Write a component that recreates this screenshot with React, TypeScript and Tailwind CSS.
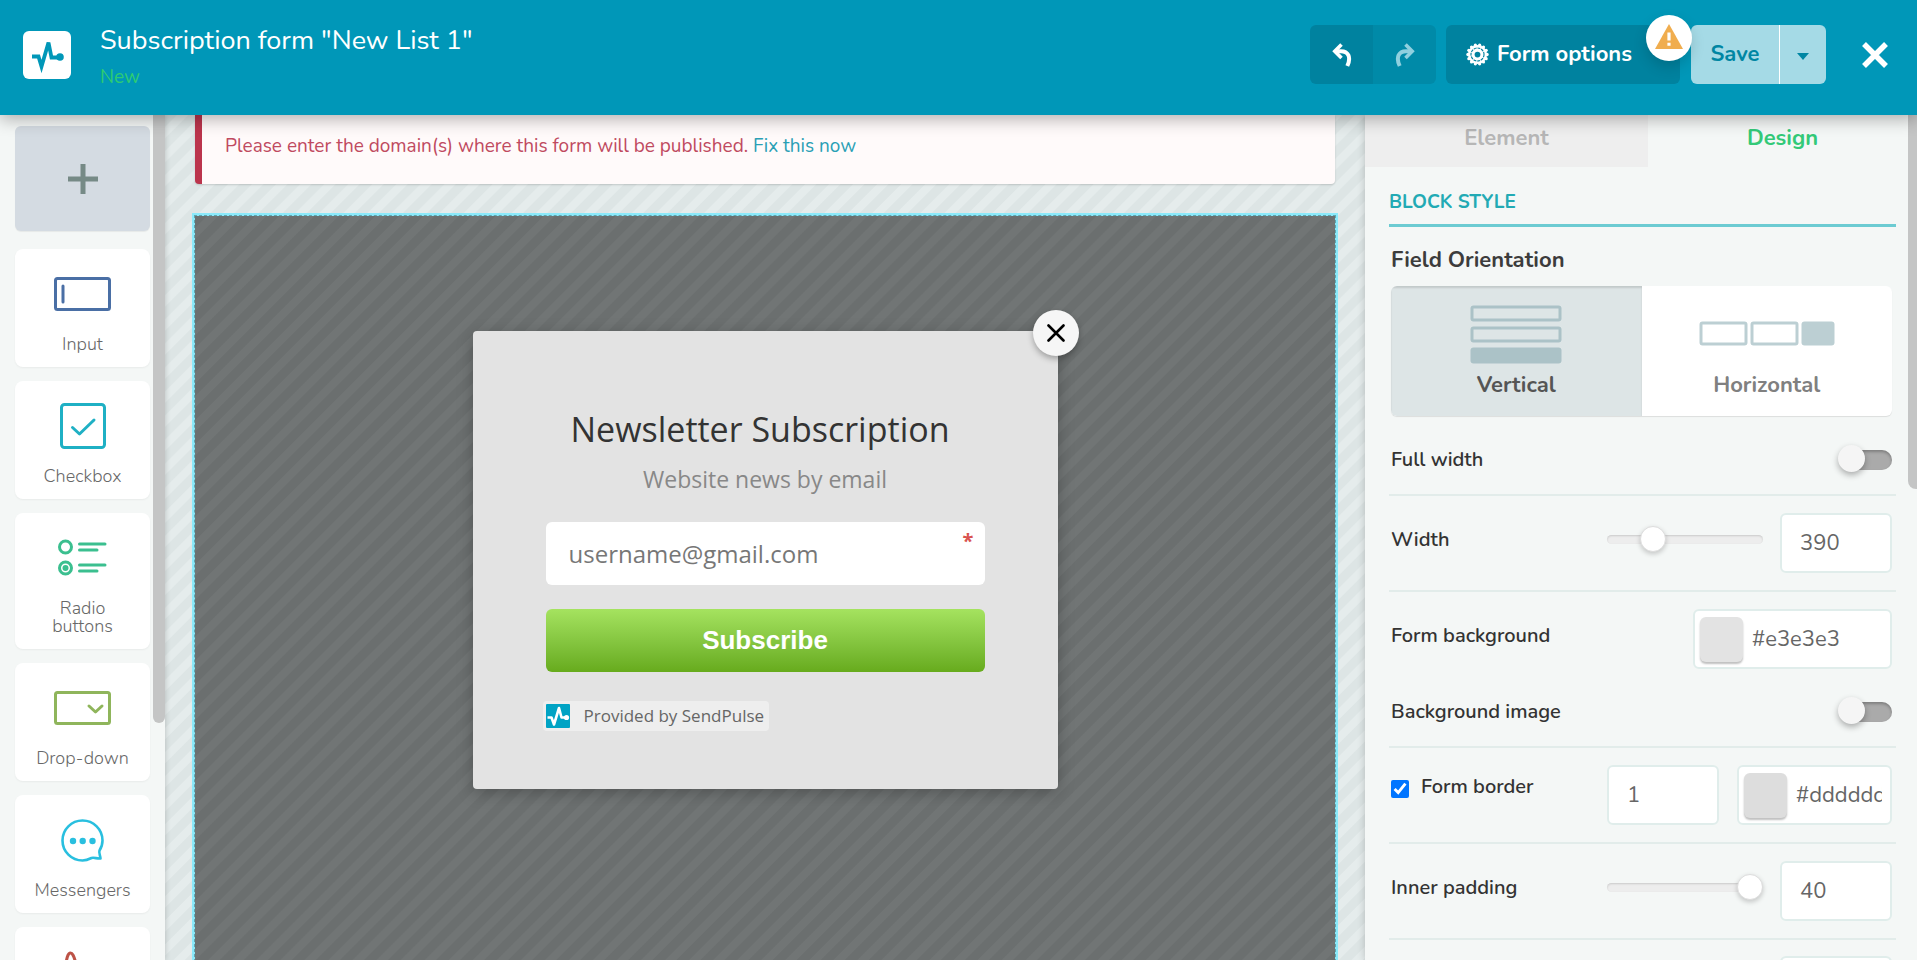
import React, { useState } from 'react';
import type { ReactNode } from 'react';

function PulseMark({ className }: { className: string }) {
  return (
    <svg viewBox="0 0 48 48" className={className} fill="none" aria-hidden="true">
      <path d="M9 25.500H15.500L18.500 35.500L25.500 11.500L28.500 26.500H36" stroke="currentColor" strokeWidth="3.800" strokeLinejoin="miter" />
      <circle cx="37" cy="26" r="3.800" fill="currentColor" />
    </svg>
  );
}

function PulseBadge() {
  return (
    <svg viewBox="0 0 24 24" width="24" height="24" fill="none" aria-hidden="true">
      <rect width="24" height="24" rx="1" fill="#00a3c4" />
      <path d="M1.500 13.500H5.500L8 20.500L13 4L15.500 13.500H20" stroke="#fff" strokeWidth="2.600" strokeLinejoin="round" />
      <circle cx="20.500" cy="13.500" r="2.600" fill="#fff" />
    </svg>
  );
}

function UndoArrow({ className }: { className?: string }) {
  return (
    <svg viewBox="0 0 20 24" className={className} width="20" height="24" fill="none" aria-hidden="true">
      <path d="M9.500 1.500L2.800 8.200L9.500 14.900" stroke="currentColor" strokeWidth="3.600" />
      <path d="M3 8.200H9C16 8.200 19.500 14 15.300 23" stroke="currentColor" strokeWidth="4" />
    </svg>
  );
}

const TEETH = Array.from({ length: 14 }, (_, i) => (i * 2 * Math.PI) / 14);

function Gear() {
  return (
    <svg viewBox="0 0 24 24" width="23" height="23" aria-hidden="true">
      <circle cx="12" cy="12" r="10" fill="#fff" />
      {TEETH.map((a) => (
        <circle key={a} cx={12 + 10 * Math.cos(a)} cy={12 + 10 * Math.sin(a)} r="1.700" fill="#fff" />
      ))}
      <circle cx="12" cy="12" r="6.800" fill="none" stroke="#00829f" strokeWidth="1.200" strokeDasharray="3 .9" />
      <circle cx="12" cy="12" r="3" fill="#00829f" />
    </svg>
  );
}

function Header() {
  return (
    <header className="relative z-20 flex h-[115px] shrink-0 items-start bg-[#0097b8] pl-[23px] pr-7 text-white shadow-[0_4px_16px_rgba(0,0,0,0.3)]">
      <div className="mt-[31px] size-12 shrink-0 rounded-md bg-white text-[#0097b8]">
        <PulseMark className="size-12" />
      </div>
      <div className="ml-[29px] mt-[23px] flex-1">
        <h1 className="text-[27px] leading-9">Subscription form "New List 1"</h1>
        <p className="text-[19px] leading-9 text-[#2ecc71]">New</p>
      </div>
      <div className="mt-[25px] flex h-[59px] items-stretch">
        <button type="button" aria-label="Undo" className="flex w-[63px] items-center justify-center rounded-l-md bg-[#00829f]">
          <UndoArrow />
        </button>
        <button type="button" aria-label="Redo" className="flex w-[63px] items-center justify-center rounded-r-md bg-[#008aa8] text-[#8fd0df]">
          <UndoArrow className="-scale-x-100" />
        </button>
        <button type="button" className="relative ml-[10px] flex w-[234px] items-center gap-2 rounded-md bg-[#00829f] pl-5 text-[22px] font-bold">
          <Gear />
          Form options
          <span className="absolute -right-3 -top-[10px] flex size-[46px] items-center justify-center rounded-full bg-white shadow-[0_6px_14px_rgba(0,0,0,0.15)]">
            <svg viewBox="0 0 28 25" width="28" height="25" className="-mt-1" aria-hidden="true">
              <path d="M14 0L28 25H0Z" fill="#f0ad4e" />
              <path d="M12.400 8.500h3.200v8h-3.200zM12.400 18.700h3.200v3h-3.200z" fill="#fff" />
            </svg>
          </span>
        </button>
        <button type="button" className="ml-[11px] w-[88px] rounded-l-md bg-[#a5dae6] text-[22px] font-bold text-[#0086a3]">
          Save
        </button>
        <button type="button" aria-label="More save options" className="flex w-[47px] items-center justify-center rounded-r-md border-l border-white bg-[#a5dae6]">
          <svg viewBox="0 0 12 7" width="12" height="7" className="mt-1" aria-hidden="true">
            <path d="M0 0H12L6 7Z" fill="#0086a3" />
          </svg>
        </button>
        <button type="button" aria-label="Close" className="ml-[35px] flex w-7 items-center">
          <svg viewBox="0 0 28 28" width="28" height="28" aria-hidden="true">
            <path d="M3 3L25 25M25 3L3 25" stroke="#fff" strokeWidth="5.500" />
          </svg>
        </button>
      </div>
    </header>
  );
}

function PaletteCard({ label, children }: { label?: string; children: ReactNode }) {
  return (
    <button type="button" className="flex w-full shrink-0 flex-col items-center rounded-lg bg-white pb-[14px] shadow-[0_1px_2px_rgba(0,0,0,0.05)]">
      <span className="flex h-[86px] items-center pt-1">{children}</span>
      <span className="min-h-[18px] w-[104px] text-center text-[18px] font-light leading-[18px] text-[#686868]">{label}</span>
    </button>
  );
}

function Palette() {
  return (
    <aside className="relative z-10 flex w-[165px] shrink-0 flex-col gap-[14px] overflow-hidden bg-[#f4f7f6] pl-[15px] pr-[15px] pt-[11px] shadow-[0_0_6px_rgba(0,0,0,0.2)]">
      <button type="button" aria-label="Add element" className="mb-1 flex h-[105px] shrink-0 items-center justify-center rounded-md bg-[#d4dbe2] shadow-[0_1px_1px_rgba(0,0,0,0.06)]">
        <svg viewBox="0 0 30 30" width="30" height="30" aria-hidden="true">
          <path d="M15 0V30M0 15H30" stroke="#768a86" strokeWidth="5" />
        </svg>
      </button>
      <PaletteCard label="Input">
        <svg viewBox="0 0 57 34" width="57" height="34" fill="none" stroke="#4a6fa5" aria-hidden="true">
          <rect x="1.500" y="1.500" width="54" height="31" rx="2" strokeWidth="3" />
          <path d="M9 9V25" strokeWidth="3" strokeLinecap="round" />
        </svg>
      </PaletteCard>
      <PaletteCard label="Checkbox">
        <svg viewBox="0 0 46 46" width="46" height="46" fill="none" stroke="#1fb0c4" strokeWidth="3" aria-hidden="true">
          <rect x="1.500" y="1.500" width="43" height="43" rx="3" />
          <path d="M12.500 24.500L19.500 31L34 17" strokeLinecap="round" strokeLinejoin="round" />
        </svg>
      </PaletteCard>
      <PaletteCard label="Radio buttons">
        <svg viewBox="0 0 49 39" width="49" height="39" fill="none" stroke="#3bbf8f" strokeWidth="3" aria-hidden="true">
          <circle cx="7.500" cy="8" r="6" />
          <circle cx="7.500" cy="29" r="6" />
          <circle cx="7.500" cy="29" r="3" fill="#3bbf8f" stroke="none" />
          <path d="M21.500 5H47M21.500 11H39M21.500 26H47M21.500 32H39" strokeLinecap="round" />
        </svg>
      </PaletteCard>
      <PaletteCard label="Drop-down">
        <svg viewBox="0 0 57 34" width="57" height="34" fill="none" stroke="#8fb55b" strokeWidth="3" aria-hidden="true">
          <rect x="1.500" y="1.500" width="54" height="31" rx="2" />
          <path d="M35 15L41.500 21L48 15" strokeLinecap="round" strokeLinejoin="round" />
        </svg>
      </PaletteCard>
      <PaletteCard label="Messengers">
        <svg viewBox="0 0 43 43" width="43" height="43" fill="none" aria-hidden="true">
          <path d="M38.500 31.500C40.500 28.500 41.500 25 41.500 21.500A20 20 0 1 0 21.500 41.500C25 41.500 27.500 40.500 30.500 39C33 38 36 40 39.500 39.500C39.500 37 37.500 34 38.500 31.500Z" stroke="#29bfdf" strokeWidth="2.600" strokeLinejoin="round" />
          <g fill="#29bfdf">
            <circle cx="12" cy="22" r="3.200" />
            <circle cx="21.700" cy="22" r="3.200" />
            <circle cx="31.500" cy="22" r="3.200" />
          </g>
        </svg>
      </PaletteCard>
      <PaletteCard>
        <svg viewBox="0 0 44 44" width="44" height="44" fill="none" stroke="#bd5347" strokeWidth="3" aria-hidden="true">
          <path d="M2 28C5 18 5 3 9.500 3C14 3 14 18 22 26C28 32 40 24 41 30C42 36 30 26 12 30" />
        </svg>
      </PaletteCard>
      <span className="absolute right-0 top-0 h-[608px] w-3 rounded-b-full bg-[#c4c5c5]" />
    </aside>
  );
}

function Preview() {
  return (
    <main className="flex min-w-0 flex-1 flex-col overflow-hidden bg-[repeating-linear-gradient(135deg,#dde5e5_0px,#dde5e5_8px,#e5ecec_9px,#e5ecec_16px,#dde5e5_17px)] px-[27px]">
      <div className="mx-[3px] h-[69px] shrink-0 rounded-b border-l-[7px] border-[#bb344c] bg-[#fffafa] pl-[23px] pt-4 text-[19px] leading-[30px] text-[#c04a60] shadow-[0_1px_2px_rgba(0,0,0,0.15)]">
        Please enter the domain(s) where this form will be published.{' '}
        <a href="#domains" className="text-[#2a9fb5]">Fix this now</a>
      </div>
      <section className="-mb-1 mt-[29px] flex flex-1 justify-center border-[3px] border-[#8be9fa] bg-[repeating-linear-gradient(135deg,#6b6f6f_0px,#6b6f6f_8px,#717575_9px,#717575_16px,#6b6f6f_17px)] pt-[115px] outline-1 -outline-offset-3 outline-dashed outline-[#5fa5ae]">
        <form
          onSubmit={(e) => e.preventDefault()}
          className="relative flex h-[458px] w-[585px] flex-col rounded bg-[#e3e3e3] px-[73px] font-['Segoe_UI','Open_Sans',sans-serif] shadow-[0_4px_16px_rgba(0,0,0,0.25)]"
        >
          <button type="button" aria-label="Close form" className="absolute -right-[21px] -top-[21px] flex size-[46px] items-center justify-center rounded-full bg-[#f6f6f6] shadow-[0_3px_6px_rgba(0,0,0,0.3)]">
            <svg viewBox="0 0 18 18" width="18" height="18" aria-hidden="true">
              <path d="M1.500 1.500L16.500 16.500M16.500 1.500L1.500 16.500" stroke="#000" strokeWidth="2.600" strokeLinecap="round" />
            </svg>
          </button>
          <h2 className="mt-[74px] pr-[10px] text-center text-[34px] leading-[48px] text-[#333]">Newsletter Subscription</h2>
          <p className="mt-[10px] text-center text-[23px] leading-8 text-[#888]">Website news by email</p>
          <div className="relative mt-[27px]">
            <input
              type="email"
              aria-label="Email"
              placeholder="username@gmail.com"
              className="h-[63px] w-full rounded-md bg-white px-[23px] text-[24px] text-[#777] outline-none placeholder:text-[#777]"
            />
            <span className="absolute right-[11px] top-[7px] text-[20px] font-bold leading-6 text-[#d9534f]">*</span>
          </div>
          <button type="submit" className="mt-6 h-[63px] rounded-md bg-linear-to-b from-[#a5e35f] to-[#67ab1c] font-['Liberation_Sans',sans-serif] text-[26px] font-bold text-white">
            Subscribe
          </button>
          <a href="#sendpulse" className="-ml-[3px] mt-[29px] flex h-[30px] items-center gap-[14px] self-start rounded bg-[#eeeeee] pl-[3px] pr-[5px] text-[17px] text-[#666]">
            <PulseBadge />
            Provided by SendPulse
          </a>
        </form>
      </section>
    </main>
  );
}

function Toggle({ id }: { id: string }) {
  return (
    <input
      id={id}
      type="checkbox"
      role="switch"
      className="relative h-5 w-[50px] appearance-none rounded-full bg-[#aaaaaa] shadow-[inset_0_2px_3px_rgba(0,0,0,0.25)] before:absolute before:-left-1 before:-top-[5px] before:size-[27px] before:rounded-full before:bg-[#f5f5f5] before:shadow-[0_3px_6px_rgba(0,0,0,0.3)] checked:bg-[#2ecc71] checked:before:left-[27px]"
    />
  );
}

function Slider({ label, min, max, value, onChange }: { label: string; min: number; max: number; value: number; onChange: (n: number) => void }) {
  return (
    <input
      type="range"
      aria-label={label}
      min={min}
      max={max}
      value={value}
      onChange={(e) => onChange(Number(e.target.value))}
      className="mb-2 mr-[17px] h-[9px] w-[156px] appearance-none rounded-full bg-[#ededed] shadow-[inset_0_1px_2px_rgba(0,0,0,0.15)] [&::-webkit-slider-thumb]:size-[26px] [&::-webkit-slider-thumb]:appearance-none [&::-webkit-slider-thumb]:rounded-full [&::-webkit-slider-thumb]:border [&::-webkit-slider-thumb]:border-[#dddddd] [&::-webkit-slider-thumb]:bg-white [&::-webkit-slider-thumb]:shadow-[0_2px_5px_rgba(0,0,0,0.2)]"
    />
  );
}

function NumberBox({ id, label, value, onChange }: { id: string; label?: string; value: number; onChange: (n: number) => void }) {
  return (
    <input
      id={id}
      aria-label={label}
      type="text"
      inputMode="numeric"
      value={value}
      onChange={(e) => onChange(Number(e.target.value) || 0)}
      className="h-[60px] w-28 rounded-md border-2 border-[#e0edeb] bg-white px-[18px] text-[22px] text-[#666] outline-none"
    />
  );
}

function ColourBox({ id, label, initial, className }: { id: string; label?: string; initial: string; className: string }) {
  const [value, setValue] = useState(initial);
  return (
    <div className={`flex h-[60px] items-center rounded-md border-2 border-[#e0edeb] bg-white pl-[5px] pr-[8px] ${className}`}>
      <button type="button" aria-label="Pick colour" className="h-[45px] w-[43px] shrink-0 rounded-md shadow-[0_2px_2px_rgba(0,0,0,0.25)]" style={{ backgroundColor: value }} />
      <input id={id} aria-label={label} value={value} onChange={(e) => setValue(e.target.value)} className="ml-[9px] min-w-0 flex-1 bg-transparent text-[22px] text-[#666] outline-none" />
    </div>
  );
}

function Row({ children }: { children: ReactNode }) {
  return <div className="flex h-24 shrink-0 items-center border-b-2 border-[#e2ecea] pl-[2px] pr-1">{children}</div>;
}

const labelStyle = 'mr-auto pb-[6px] text-[20px] font-semibold text-[#333333]';

function Settings() {
  const [width, setWidth] = useState(390);
  const [border, setBorder] = useState(1);
  const [padding, setPadding] = useState(40);
  const [corner, setCorner] = useState(4);
  return (
    <aside className="relative z-10 flex w-[552px] shrink-0 flex-col overflow-hidden bg-[#f4f7f6] shadow-[0_0_8px_rgba(0,0,0,0.2)]">
      <div role="tablist" className="flex h-[52px] shrink-0 text-[22px] font-bold">
        <button type="button" role="tab" aria-selected="false" className="w-[283px] bg-[#eeeeee] pb-[6px] text-[#b6b6b6]">Element</button>
        <button type="button" role="tab" aria-selected="true" className="flex-1 pb-[6px] text-[#33c978]">Design</button>
      </div>
      <div className="ml-6 mr-[21px] flex min-h-0 flex-col">
        <h2 className="flex h-[60px] shrink-0 items-end border-b-[3px] border-[#6ccbd2] pb-[7px] text-[19px] font-bold leading-[30px] text-[#22aab4]">
          BLOCK STYLE
        </h2>
        <div className="pl-[2px] pr-1 pt-[17px]">
          <h3 className="text-[22px] font-bold leading-8 text-[#3c3c3c]">Field Orientation</h3>
          <div className="mt-[10px] flex h-[130px] overflow-hidden rounded-md bg-white shadow-[0_1px_1px_rgba(0,0,0,0.1)]">
            <button type="button" aria-pressed="true" className="flex flex-1 flex-col items-center bg-[#dde5e6] pt-[19px] shadow-[inset_0_2px_2px_rgba(0,0,0,0.12)]">
              <svg viewBox="0 0 92 60" width="92" height="60" aria-hidden="true">
                <g fill="none" stroke="#abc2c7" strokeWidth="3">
                  <rect x="2" y="2" width="88" height="13" rx="1.500" />
                  <rect x="2" y="23" width="88" height="13" rx="1.500" />
                </g>
                <rect x=".5" y="42.500" width="91" height="16" rx="3" fill="#abc2c7" />
              </svg>
              <span className="mt-1 text-[22px] font-bold leading-8 text-[#555]">Vertical</span>
            </button>
            <button type="button" aria-pressed="false" className="flex flex-1 flex-col items-center pt-[19px]">
              <svg viewBox="0 0 136 60" width="136" height="60" aria-hidden="true">
                <g fill="none" stroke="#bccfd3" strokeWidth="3">
                  <rect x="2" y="18" width="45" height="21" rx="1.500" />
                  <rect x="53" y="18" width="45" height="21" rx="1.500" />
                </g>
                <rect x="102.500" y="16.500" width="33" height="24" rx="3" fill="#bccfd3" />
              </svg>
              <span className="mt-1 text-[22px] font-bold leading-8 text-[#808080]">Horizontal</span>
            </button>
          </div>
        </div>
        <div className="flex h-20 shrink-0 items-center border-b-2 border-[#e2ecea] pl-[2px] pr-1 pt-[9px]">
          <label htmlFor="full-width" className="mr-auto text-[20px] font-semibold text-[#333333]">Full width</label>
          <Toggle id="full-width" />
        </div>
        <Row>
          <label htmlFor="width" className={labelStyle}>Width</label>
          <Slider label="Width slider" min={290} max={690} value={width} onChange={setWidth} />
          <NumberBox id="width" value={width} onChange={setWidth} />
        </Row>
        <div className="flex h-[156px] shrink-0 flex-col border-b-2 border-[#e2ecea] pl-[2px] pr-1 pt-[17px]">
          <div className="flex items-center">
            <label htmlFor="form-background" className={labelStyle}>Form background</label>
            <ColourBox id="form-background" initial="#e3e3e3" className="w-[199px]" />
          </div>
          <div className="mt-[21px] flex h-[43px] items-center">
            <label htmlFor="background-image" className="mr-auto text-[20px] font-semibold text-[#333333]">Background image</label>
            <Toggle id="background-image" />
          </div>
        </div>
        <Row>
          <span className="mr-auto flex items-center gap-3 pb-3">
            <input id="form-border" type="checkbox" defaultChecked className="size-[18px] accent-[#0075ff]" />
            <label htmlFor="form-border" className="pb-1 text-[20px] font-semibold text-[#333333]">Form border</label>
          </span>
          <NumberBox id="border-width" label="Border width" value={border} onChange={setBorder} />
          <span className="w-[18px]" />
          <ColourBox id="border-colour" label="Border colour" initial="#dddddd" className="w-[155px]" />
        </Row>
        <Row>
          <label htmlFor="inner-padding" className={labelStyle}>Inner padding</label>
          <Slider label="Inner padding slider" min={0} max={40} value={padding} onChange={setPadding} />
          <NumberBox id="inner-padding" value={padding} onChange={setPadding} />
        </Row>
        <div className="flex shrink-0 justify-end pr-1 pt-4">
          <NumberBox id="corner" label="Corner radius" value={corner} onChange={setCorner} />
        </div>
      </div>
      <span className="absolute right-0 top-0 h-[374px] w-[9px] rounded-bl-lg bg-[#c4c5c5]" />
    </aside>
  );
}

export default function App() {
  return (
    <div className="flex h-screen flex-col overflow-hidden font-['Nunito','Lato',sans-serif]">
      <Header />
      <div className="flex min-h-0 flex-1">
        <Palette />
        <Preview />
        <Settings />
      </div>
    </div>
  );
}
